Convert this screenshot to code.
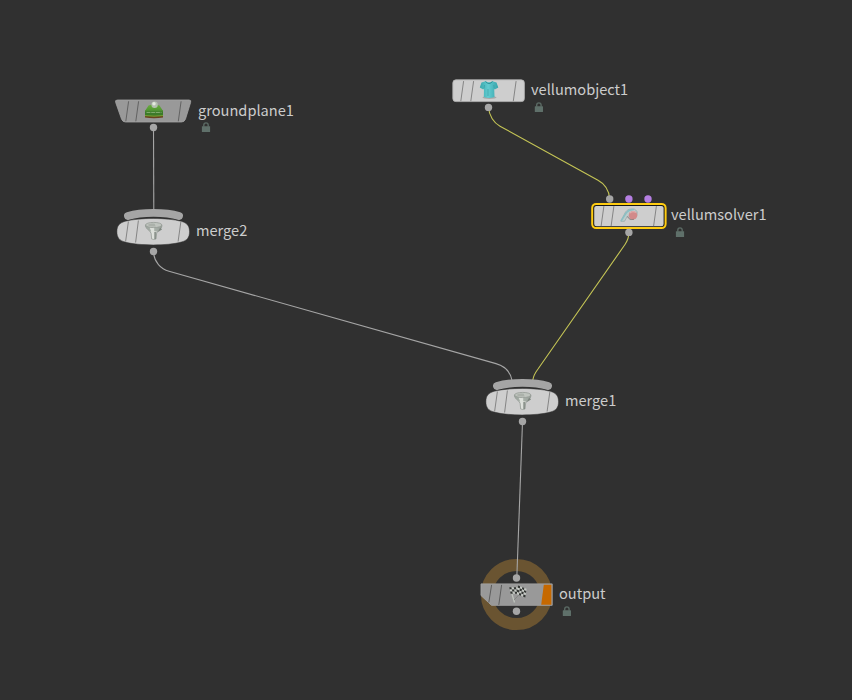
import React from "react";

type Point = { x: number; y: number };

const Lock = ({ x, y }: Point) => (
  <g transform={`translate(${x} ${y})`}>
    <path d="M2.100 4.500V2.800a2.200 2.200 0 0 1 4.400 0v1.700" fill="none" stroke="#5a6963" strokeWidth="1.400" />
    <rect x="0.200" y="3.900" width="8.200" height="5.900" rx="0.500" fill="#5f706a" />
  </g>
);

const Port = ({ x, y, color = "#a6a6a6" }: Point & { color?: string }) => (
  <circle cx={x} cy={y} r="3.700" fill={color} />
);

const Dividers = ({ x, y, color = "#858585" }: Point & { color?: string }) => (
  <path
    d={`M${x + 11.1} ${y + 1.5}l-2.8 20M${x + 21.1} ${y + 1.5}l-2.8 20M${x + 63.6} ${y + 1.5}l-2.8 20`}
    stroke={color}
    strokeWidth="1"
    fill="none"
  />
);

const Funnel = () => (
  <g>
    <path d="M-8.300 -5.800C-8.300 -3.500 -6.500 -1.800 -4 0L-2.600 2.500L-2 8Q0 9 2.300 8L3 2L4.500 -0.200C6.500 -1.500 8.300 -3.500 8.300 -5.800Z" fill="url(#metal)" stroke="#858d86" strokeWidth="0.600" />
    <path d="M-8.200 -5C-7.600 -2.800 -6 -1.500 -4 0H4C6.500 -1.500 7.800 -2.800 8.200 -5Q0 -1.500 -8.200 -5Z" fill="#9ea69f" opacity="0.800" />
    <path d="M-4 -3.200L0.500 -3L0.500 1.500H-2Z" fill="#dce0da" />
    <ellipse cx="0" cy="-6" rx="8.200" ry="2.600" fill="#c0c5bf" stroke="#959c95" strokeWidth="0.800" />
    <path d="M-6.500 -6Q-3 -7.700 1 -7.300L2 -4.500Q-4 -4 -6.500 -6Z" fill="#abb1aa" />
    <path d="M6.500 -3.500L8.300 -1.500L4 1.200Z" fill="#7f8780" />
    <path d="M1.400 1V8" stroke="#78817a" strokeWidth="1.300" />
  </g>
);

const MergeNode = ({ x, y }: Point) => (
  <g transform={`translate(${x} ${y})`}>
    <path d="M-25.500 -16C-12 -20.200 12 -20.200 25.500 -16" fill="none" stroke="#a5a5a5" strokeWidth="7.900" strokeLinecap="round" />
    <path d="M-28 -10.700C-14 -14.500 14 -14.500 28 -10.700C34 -9 36.300 -6 36.300 -0.300C36.300 5.400 34 8.500 28 10.100C14 13.900 -14 13.900 -28 10.100C-34 8.500 -36.300 5.400 -36.300 -0.300C-36.300 -6 -34 -9 -28 -10.700Z" transform="translate(-0.300 0)" fill="#cecece" stroke="#303030" strokeWidth="0.500" />
    <path d="M-25.100 -10.500L-27.900 9.500M-15.100 -11.500L-17.900 10.500M27.400 -10.500L24.600 9.500" stroke="#858585" fill="none" />
    <g transform="translate(0.200 -1)"><Funnel /></g>
    <Port x={0} y={19.500} />
  </g>
);

const flagCells = (dx: number, dy: number, cols: number, rows: number) =>
  Array.from({ length: cols * rows }, (_, i) => {
    const c = i % cols;
    const r = Math.floor(i / cols);
    return (
      <path
        key={i}
        d={`M${dx + c * 2.2} ${dy + r * 2.2 + c * 0.5}l2.2 .5v2.2l-2.2 -.5z`}
        fill={(c + r) % 2 ? "#c6cac5" : "#343734"}
      />
    );
  });

const labels = [
  { text: "groundplane1", place: "left-[198px] top-[99px]" },
  { text: "merge2", place: "left-[196px] top-[219px]" },
  { text: "vellumobject1", place: "left-[531px] top-[78px]" },
  { text: "vellumsolver1", place: "left-[671px] top-[203px]" },
  { text: "merge1", place: "left-[565px] top-[389px]" },
  { text: "output", place: "left-[559px] top-[582px]" },
];

export default function App() {
  return (
    <main className="relative h-[700px] w-[852px] overflow-hidden bg-[#303030] font-['Noto_Sans_CJK_SC',sans-serif]">
      <svg className="absolute inset-0" width="852" height="700" viewBox="0 0 852 700">
        <defs>
          <linearGradient id="metal">
            <stop offset="0" stopColor="#8d958e" />
            <stop offset="0.450" stopColor="#e4e7e2" />
            <stop offset="1" stopColor="#848c85" />
          </linearGradient>
          <linearGradient id="shirt">
            <stop offset="0" stopColor="#39a8ac" />
            <stop offset="0.450" stopColor="#62cbd0" />
            <stop offset="1" stopColor="#37a4ab" />
          </linearGradient>
          <linearGradient id="grass" x1="0" y1="0" x2="0" y2="1">
            <stop offset="0" stopColor="#6cac42" />
            <stop offset="1" stopColor="#4d942e" />
          </linearGradient>
        </defs>

        <circle cx="516.500" cy="594.500" r="29.600" fill="none" stroke="#6a5431" strokeWidth="12" />

        <g fill="none" strokeWidth="1.100">
          <path d="M153.500 127L153.800 210" stroke="#a5a5a5" />
          <path d="M153.500 252C154 262 161 269 169 271.300L496 363.600C504 365.800 510 371 511.900 380" stroke="#a5a5a5" />
          <path d="M522.500 422L516.800 578" stroke="#a5a5a5" />
          <path d="M488.500 107C489 116 494 123 500 126.200L598 180.300C605 184 609 190 609.700 199" stroke="#c4c455" />
          <path d="M629 232C629 237 628 240 625 244.500L538 369C535 373 533.500 375.500 532.800 380" stroke="#c4c455" />
        </g>

        {/* groundplane1 */}
        <path d="M117.500 100H189Q191.500 100 190.600 102.500L185.500 119Q184.500 122 181.500 122H125.500Q122.500 122 121.500 119L115.700 102.500Q114.700 100 117.500 100Z" fill="#999" stroke="#a3a3a3" strokeWidth="0.800" />
        <Dividers x={117.500} y={99.800} color="#626262" />
        <g>
          <path d="M145 114.500H163V117.500Q154 119 145 117.500Z" fill="#68421d" />
          <path d="M145 111L148.500 105.500Q154 103.500 159.500 105.500L163 111Z" fill="url(#grass)" />
          <path d="M145 110.500H163V115.200Q154 116.500 145 115.200Z" fill="#3c7a2a" />
          <path d="M145 110.900H163" stroke="#5d9d3d" strokeWidth="0.700" />
          <path d="M146.500 112.500H161.500" stroke="#7fa96b" strokeDasharray="4 0.700" strokeWidth="1.100" />
          <path d="M145 115.600Q154 116.700 163 115.600" fill="none" stroke="#71ac32" strokeWidth="1" />
          <circle cx="154.600" cy="104.800" r="3.200" fill="#b4bfb0" />
          <circle cx="154" cy="103.800" r="1.700" fill="#e4e9df" />
        </g>
        <Port x={153.500} y={127.500} />
        <Lock x={201.700} y={122.300} />

        <MergeNode x={153.500} y={232} />

        {/* vellumobject1 */}
        <rect x="452.800" y="79.800" width="71.600" height="21.800" rx="3.200" fill="#cecece" stroke="#b2b2b2" strokeWidth="0.800" />
        <Dividers x={452.500} y={79.600} />
        <ellipse cx="489.500" cy="97.500" rx="7" ry="1.500" fill="#888" opacity="0.550" />
        <path d="M485.500 81.200Q489 83.200 492.500 81.200L496.500 82.500L498.300 87.500L494.800 89.500L494.200 88.700L494.500 97Q489 99 483.800 97L484 88.700L483.200 89.500L479.800 87.500L481.500 82.500Z" fill="url(#shirt)" />
        <path d="M485.500 81.500Q489 85.500 492.500 81.500" fill="none" stroke="#28878d" strokeWidth="0.900" />
        <path d="M484 88.500L484.500 85M494.200 88.500L493.800 85M488 89V96" fill="none" stroke="#35999e" strokeWidth="0.600" />
        <Port x={488.500} y={107.400} />
        <Lock x={534.600} y={102.300} />

        {/* vellumsolver1 */}
        <rect x="592.200" y="203.900" width="73.400" height="24.200" rx="4" fill="#171717" stroke="#ffcc11" strokeWidth="2" />
        <rect x="594.200" y="205.900" width="69.400" height="20.300" rx="2.200" fill="#cecece" />
        <Dividers x={592.800} y={204.600} />
        <path d="M620.800 221.300L625.500 212Q628.500 208 634.500 209.200Q638.500 211 637 214.500Q635.500 219.500 630.500 219.700L627.500 216L624.500 221.300Z" fill="#bdcccc" stroke="#899fa1" strokeWidth="0.600" />
        <path d="M621 221L626.500 212.500Q629.500 209.300 634 209.500" fill="none" stroke="#8bbfc3" strokeWidth="1.500" />
        <circle cx="633" cy="215.300" r="4.300" fill="#d28a8a" />
        <path d="M630 213Q632.500 210.500 636 212.500" fill="none" stroke="#dfadad" strokeWidth="1.200" />
        <path d="M627.500 216.500Q629 220.500 634 219.300" fill="none" stroke="#8d7777" strokeWidth="0.800" />
        <Port x={609.700} y={199} />
        <Port x={628.900} y={199} color="#b57fe2" />
        <Port x={648} y={199} color="#b57fe2" />
        <Port x={628.900} y={232.400} />
        <Lock x={675.700} y={227.300} />

        <MergeNode x={522.500} y={402} />

        {/* output */}
        <path d="M481 583.900H552.200V605.300H491.500L481 595.500Z" fill="#999" stroke="#a4a4a4" strokeWidth="0.900" />
        <path d="M543.800 584.700H551.400V604.700H541.200Z" fill="#c66900" />
        <path d="M491.600 584.900L488.800 602.500M501.600 584.900L498.800 604.900" stroke="#5d5d5d" fill="none" />
        <path d="M510.500 589L514.500 602.500" stroke="#bfc4bd" strokeWidth="1.300" />
        <path d="M523.500 590L514 600" stroke="#777b77" strokeWidth="0.700" />
        <g transform="rotate(-12 513 588)">{flagCells(509.500, 586.500, 4, 3)}</g>
        <g transform="rotate(8 521 590)">{flagCells(517.500, 586, 4, 4)}</g>
        <Port x={516.500} y={578} />
        <Port x={516.500} y={611.300} />
        <Lock x={562.600} y={606.300} />
      </svg>
      {labels.map((l) => (
        <span key={l.text} className={`absolute whitespace-nowrap text-[14.600px] leading-[22px] text-[#cccccc] ${l.place}`}>
          {l.text}
        </span>
      ))}
    </main>
  );
}
